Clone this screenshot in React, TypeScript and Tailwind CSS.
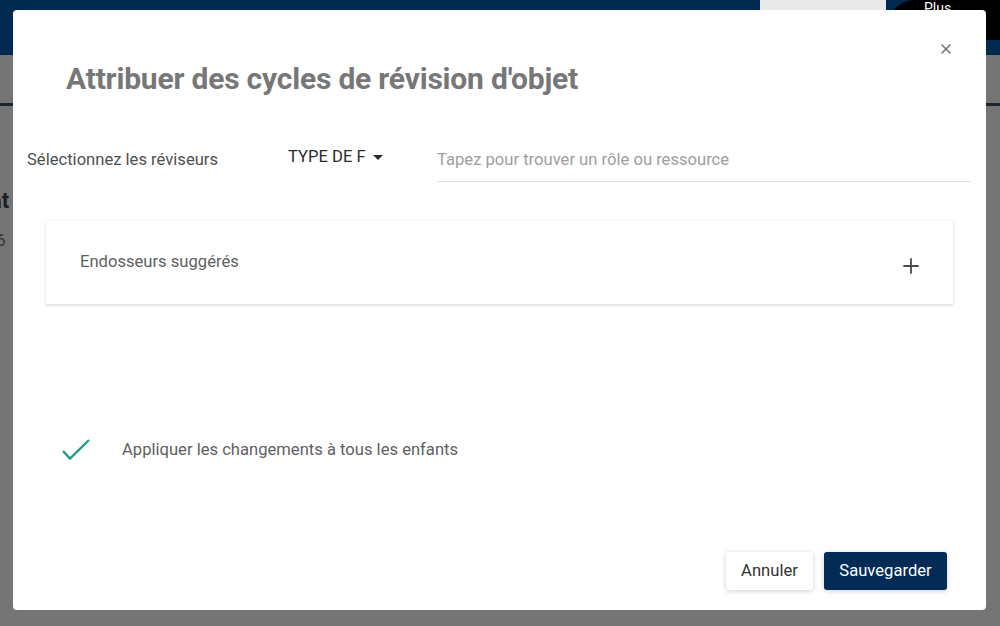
import { Plus, X } from 'lucide-react';

const FONT = { fontFamily: 'Roboto, "Noto Sans", Arial, sans-serif' };

function Background() {
  return (
    <div className="h-[626px] w-[1000px] flex flex-col bg-[#757575] overflow-hidden">
      <div className="h-[55px] bg-[#022a50] flex items-start justify-end">
        <div className="w-[126px] h-[10px] bg-[#e9e9e9] mr-[1px]" />
        <div className="w-[113px] h-[40px] bg-black rounded-tl-[28px] text-white text-[14px] pl-[37px] leading-[16px]">
          Plus
        </div>
      </div>
      <div className="h-[51px] border-b-[3px] border-[#1b2530]" />
      <div className="pt-[78px] text-[22px] font-bold text-[#1e1e1e] -ml-[10px]">at</div>
      <div className="pt-[12px] text-[16px] text-[#333] -ml-[8px]">-6</div>
    </div>
  );
}

function Modal() {
  return (
    <div className="absolute left-[13px] top-[10px] w-[973px] h-[600px] bg-white rounded-[4px] flex flex-col">
      <div className="flex items-start justify-between pl-[53px] pr-[32px] pt-[51px]">
        <h1 className="text-[30px] font-bold text-[#777] tracking-[-0.2px] leading-[36px]">
          Attribuer des cycles de révision d'objet
        </h1>
        <X size={16} strokeWidth={2.5} className="text-[#757575] -mt-[20px]" />
      </div>

      <div className="flex items-start mt-[42px] pl-[14px] pr-[15px] text-[16.6px]">
        <div className="w-[261px] pt-[9px] text-[#505050]">Sélectionnez les réviseurs</div>
        <div className="w-[149px] pt-[6px] flex items-center text-[#2b2b2b]">
          TYPE DE F
          <svg width="10" height="5" viewBox="0 0 10 5" className="ml-[7px]">
            <path d="M0 0 L10 0 L5 5 Z" fill="#2b2b2b" />
          </svg>
        </div>
        <div className="flex-1 border-b border-[#e0e0e0] h-[43px] pt-[9px] text-[#9e9e9e]">
          Tapez pour trouver un rôle ou ressource
        </div>
      </div>

      <div className="mx-[33px] mt-[39px] h-[83px] bg-white shadow-[0_1px_3px_rgba(0,0,0,0.18)] flex items-center justify-between pl-[34px] pr-[30px]">
        <span className="text-[16.6px] text-[#5f5f5f]">Endosseurs suggérés</span>
        <Plus size={24} strokeWidth={1.8} className="text-[#4a4a4a] mt-[6px]" />
      </div>

      <div className="flex items-center mt-[134px] pl-[48px]">
        <svg width="30" height="24" viewBox="0 0 30 24" className="mr-[31px]">
          <path d="M2 13 L9 20.5 L28 2" fill="none" stroke="#1e9a85" strokeWidth="2.4" />
        </svg>
        <span className="text-[16.6px] text-[#5f5f5f]">Appliquer les changements à tous les enfants</span>
      </div>

      <div className="flex-1" />

      <div className="flex justify-end gap-[11px] pr-[39px] pb-[20px]">
        <button className="w-[87px] h-[38px] bg-white rounded-[3px] shadow-[0_1px_5px_rgba(0,0,0,0.2)] text-[16.6px] text-[#333]">
          Annuler
        </button>
        <button className="w-[123px] h-[38px] bg-[#032b55] rounded-[3px] shadow-[0_1px_5px_rgba(0,0,0,0.2)] text-[16.6px] text-white">
          Sauvegarder
        </button>
      </div>
    </div>
  );
}

export default function App() {
  return (
    <div className="relative w-[1000px] h-[626px]" style={FONT}>
      <Background />
      <Modal />
    </div>
  );
}
